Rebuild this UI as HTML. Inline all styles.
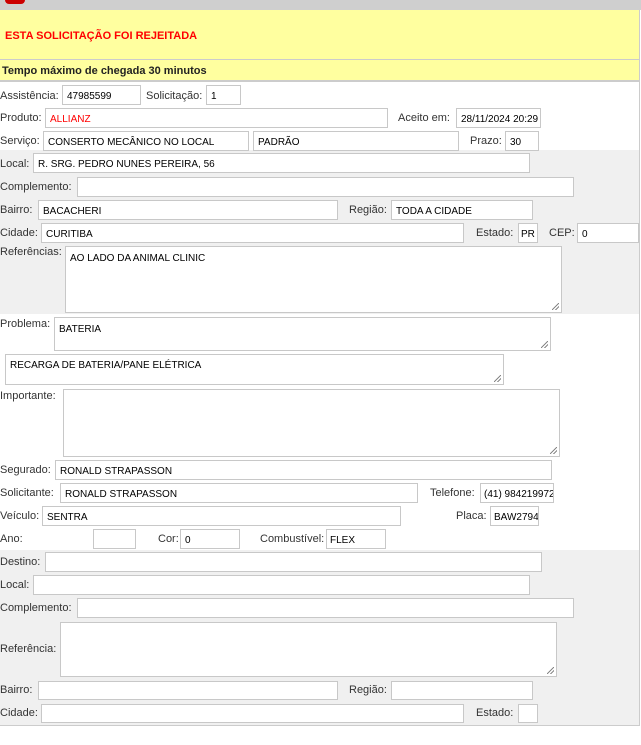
<!DOCTYPE html>
<html><head><meta charset="utf-8"><style>
*{box-sizing:border-box;margin:0;padding:0}
body{width:641px;height:745px;background:#fff;position:relative;overflow:hidden;font-family:"Liberation Sans","DejaVu Sans",sans-serif;font-size:11px;color:#333}
.a{position:absolute}
.l{position:absolute;font-size:11px;color:#333;white-space:nowrap;line-height:12px}
.i{position:absolute;background:#fff;border:1px solid #c8c8c8;height:20px;font-size:10px;color:#000;padding:5px 0 0 4px;white-space:nowrap;overflow:hidden;line-height:11px}
.t{position:absolute;background:#fff;border:1px solid #c8c8c8;font-size:10px;color:#000;padding:6px 0 0 4px;white-space:nowrap;overflow:hidden}
.t:after{content:"";position:absolute;right:2px;bottom:2px;width:7px;height:7px;background:linear-gradient(135deg,transparent 45%,#888 45%,#888 55%,transparent 55%,transparent 70%,#888 70%,#888 80%,transparent 80%)}
.g{position:absolute;left:0;width:639px;background:#f0f0f0}
</style></head><body>
<div class="a" style="left:0;top:0;width:641px;height:10px;background:#cfcfcf"></div>
<div class="a" style="left:5px;top:-6px;width:20px;height:10px;background:#c00;border-radius:4px"></div>
<div class="a" style="left:0;top:10px;width:640px;height:50px;background:#ffff9f;border-right:1px solid #ccc;border-bottom:1px solid #ccc"></div>
<div class="l" style="left:5px;top:30px;color:#f00;font-weight:bold;font-size:11px">ESTA SOLICITAÇÃO FOI REJEITADA</div>
<div class="a" style="left:0;top:60px;width:640px;height:22px;background:#ffff9f;border-right:1px solid #ccc;border-bottom:2px solid #ccc"></div>
<div class="l" style="left:2px;top:65px;font-weight:bold;color:#222">Tempo máximo de chegada 30 minutos</div>
<div class="a" style="left:639px;top:82px;width:1px;height:644px;background:#ccc"></div>
<div class="g" style="top:150px;height:164px"></div>
<div class="g" style="top:550px;height:176px;border-bottom:1px solid #ccc"></div>

<div class="l" style="left:0;top:90px">Assistência:</div><div class="i" style="left:62px;top:85px;width:79px">47985599</div>
<div class="l" style="left:146px;top:90px">Solicitação:</div><div class="i" style="left:206px;top:85px;width:35px">1</div>
<div class="l" style="left:0;top:112px">Produto:</div><div class="i" style="left:45px;top:108px;width:343px;color:#f00">ALLIANZ</div>
<div class="l" style="left:398px;top:112px">Aceito em:</div><div class="i" style="left:456px;top:108px;width:85px">28/11/2024 20:29</div>
<div class="l" style="left:0;top:135px">Serviço:</div><div class="i" style="left:43px;top:131px;width:206px">CONSERTO MECÂNICO NO LOCAL</div>
<div class="i" style="left:253px;top:131px;width:206px">PADRÃO</div>
<div class="l" style="left:470px;top:135px">Prazo:</div><div class="i" style="left:505px;top:131px;width:34px">30</div>

<div class="l" style="left:0;top:158px">Local:</div><div class="i" style="left:33px;top:153px;width:497px">R. SRG. PEDRO NUNES PEREIRA, 56</div>
<div class="l" style="left:0;top:181px">Complemento:</div><div class="i" style="left:77px;top:177px;width:497px"></div>
<div class="l" style="left:0;top:204px">Bairro:</div><div class="i" style="left:38px;top:200px;width:300px">BACACHERI</div>
<div class="l" style="left:349px;top:204px">Região:</div><div class="i" style="left:391px;top:200px;width:142px">TODA A CIDADE</div>
<div class="l" style="left:0;top:227px">Cidade:</div><div class="i" style="left:41px;top:223px;width:423px">CURITIBA</div>
<div class="l" style="left:476px;top:227px">Estado:</div><div class="i" style="left:518px;top:223px;width:20px;padding-left:2px">PR</div>
<div class="l" style="left:549px;top:227px">CEP:</div><div class="i" style="left:577px;top:223px;width:62px">0</div>
<div class="l" style="left:0;top:246px">Referências:</div><div class="t" style="left:65px;top:246px;width:497px;height:67px">AO LADO DA ANIMAL CLINIC</div>

<div class="l" style="left:0;top:318px">Problema:</div><div class="t" style="left:54px;top:317px;width:497px;height:34px">BATERIA</div>
<div class="t" style="left:5px;top:354px;width:499px;height:31px;padding-top:5px">RECARGA DE BATERIA/PANE ELÉTRICA</div>
<div class="l" style="left:0;top:390px">Importante:</div><div class="t" style="left:63px;top:389px;width:497px;height:68px"></div>

<div class="l" style="left:0;top:464px">Segurado:</div><div class="i" style="left:55px;top:460px;width:497px">RONALD STRAPASSON</div>
<div class="l" style="left:0;top:487px">Solicitante:</div><div class="i" style="left:60px;top:483px;width:358px">RONALD STRAPASSON</div>
<div class="l" style="left:430px;top:487px">Telefone:</div><div class="i" style="left:480px;top:483px;width:74px;padding-left:3px">(41) 984219972</div>
<div class="l" style="left:0;top:510px">Veículo:</div><div class="i" style="left:42px;top:506px;width:359px">SENTRA</div>
<div class="l" style="left:456px;top:510px">Placa:</div><div class="i" style="left:490px;top:506px;width:49px;padding-left:3px">BAW2794</div>
<div class="l" style="left:0;top:533px">Ano:</div><div class="i" style="left:93px;top:529px;width:43px"></div>
<div class="l" style="left:158px;top:533px">Cor:</div><div class="i" style="left:180px;top:529px;width:60px">0</div>
<div class="l" style="left:260px;top:533px">Combustível:</div><div class="i" style="left:326px;top:529px;width:60px;padding-left:3px">FLEX</div>

<div class="l" style="left:0;top:556px">Destino:</div><div class="i" style="left:45px;top:552px;width:497px"></div>
<div class="l" style="left:0;top:579px">Local:</div><div class="i" style="left:33px;top:575px;width:497px"></div>
<div class="l" style="left:0;top:602px">Complemento:</div><div class="i" style="left:77px;top:598px;width:497px"></div>
<div class="l" style="left:0;top:643px">Referência:</div><div class="t" style="left:60px;top:622px;width:497px;height:55px"></div>
<div class="l" style="left:0;top:684px">Bairro:</div><div class="i" style="left:38px;top:681px;width:300px;height:19px"></div>
<div class="l" style="left:349px;top:684px">Região:</div><div class="i" style="left:391px;top:681px;width:142px;height:19px"></div>
<div class="l" style="left:0;top:707px">Cidade:</div><div class="i" style="left:41px;top:704px;width:423px;height:19px"></div>
<div class="l" style="left:476px;top:707px">Estado:</div><div class="i" style="left:518px;top:704px;width:20px;height:19px"></div>
</body></html>
